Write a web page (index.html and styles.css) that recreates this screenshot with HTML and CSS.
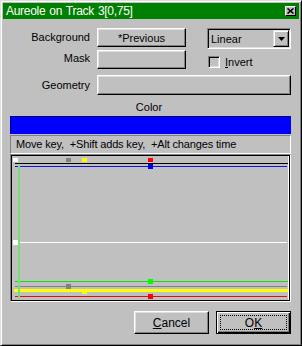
FILE: index.html
```html
<!DOCTYPE html>
<html lang="en">
<head>
    <meta charset="UTF-8">
    <title>Aureole on Track 3[0,75]</title>
    <link rel="stylesheet" href="styles.css">
</head>
<body>
    <div class="window">
        <div class="titlebar">
            <span class="title">Aureole on Track 3[0,75]</span>
            <span class="close">
                <svg width="7" height="6" viewBox="0 0 7 6"><path d="M0.5 0.5 L6.5 5.5 M6.5 0.5 L0.5 5.5" stroke="#000" stroke-width="1.6" fill="none"/></svg>
            </span>
        </div>

        <div class="dialog">
            <div class="row row-bg">
                <span class="lbl">Background</span>
                <button class="btn btn-src">*Previous</button>
                <div class="combo">
                    <span class="combo-text">Linear</span>
                    <span class="combo-arrow">
                        <svg width="7" height="4" viewBox="0 0 7 4"><path d="M0 0 H7 L3.5 4 Z" fill="#000"/></svg>
                    </span>
                </div>
            </div>

            <div class="row row-mask">
                <span class="lbl">Mask</span>
                <button class="btn btn-src"></button>
                <label class="check">
                    <span class="box"></span>
                    <span><u>I</u>nvert</span>
                </label>
            </div>

            <div class="row row-geo">
                <span class="lbl">Geometry</span>
                <button class="btn btn-geo"></button>
            </div>

            <div class="color-label">Color</div>
            <div class="swatch"></div>
            <div class="hint">Move key,  +Shift adds key,  +Alt changes time</div>

            <div class="graph">
                <svg class="curves" viewBox="11 155 279 146" shape-rendering="crispEdges">
                    <!-- value lines -->
                    <rect x="15" y="163" width="273" height="1" fill="#000"/>
                    <rect x="15" y="166" width="272" height="1" fill="#1414d8"/>
                    <rect x="15" y="242" width="272" height="1" fill="#fff"/>
                    <rect x="15" y="281" width="273" height="1" fill="#10e010"/>
                    <rect x="15" y="286" width="272" height="1" fill="#808080"/>
                    <rect x="14" y="289" width="274" height="3" fill="#ffff00"/>
                    <rect x="15" y="296" width="272" height="1" fill="#e01010"/>
                    <rect x="18" y="165" width="2" height="134" fill="#78e078"/>

                    <!-- keys -->
                    <rect x="13" y="158" width="5" height="4" fill="#fff"/>
                    <rect x="66" y="158" width="5" height="4" fill="#808080"/>
                    <rect x="82" y="158" width="5" height="4" fill="#ffff00"/>
                    <rect x="148" y="158" width="5" height="4" fill="#ff0000"/>
                    <rect x="148" y="164" width="5" height="5" fill="#0000e0"/>
                    <rect x="13" y="240" width="5" height="5" fill="#fff"/>
                    <rect x="148" y="279" width="5" height="5" fill="#00ff00"/>
                    <rect x="66" y="284" width="5" height="5" fill="#808080"/>
                    <rect x="82" y="289" width="5" height="5" fill="#ffff00"/>
                    <rect x="148" y="294" width="5" height="5" fill="#ff0000"/>
                </svg>
            </div>

            <div class="actions">
                <button class="btn btn-action"><span class="cap"><u>C</u>ancel</span></button>
                <button class="btn btn-action btn-default"><span class="cap focus">O<u>K</u></span></button>
            </div>
        </div>
    </div>
</body>
</html>
```

FILE: styles.css
```css
*{
    margin: 0;
    padding: 0;
    box-sizing: border-box;
}
body{
    width: 302px;
    height: 346px;
    background: #c0c0c0;
    font-family: "Liberation Sans", Arial, sans-serif;
    font-size: 11px;
    color: #000;
}
.window{
    width: 302px;
    height: 346px;
    background: #c0c0c0;
    border: 1px solid;
    border-color: #dfdfdf #000 #000 #dfdfdf;
    box-shadow: inset 1px 1px #fff, inset -1px -1px #808080;
    padding: 2px;
}
.titlebar{
    height: 16px;
    background: #008000;
    display: flex;
    align-items: center;
    padding-left: 3px;
}
.title{
    color: #fff;
    font-size: 12px;
    letter-spacing: -0.3px;
    word-spacing: 1px;
}
.close{
    margin-left: auto;
    margin-right: 3px;
    width: 11px;
    height: 10px;
    background: #c0c0c0;
    border: 1px solid;
    border-color: #fff #000 #000 #fff;
    display: flex;
    align-items: center;
    justify-content: center;
}
.dialog{
    padding-right: 8px;
}

/* form rows */
.row{
    display: flex;
    align-items: flex-start;
}
.row-bg{
    margin-top: 9px;
}
.row-mask{
    margin-top: 1px;
}
.row-geo{
    margin-top: 6px;
}
.lbl{
    width: 87px;
    margin-right: 7px;
    text-align: right;
    line-height: 19px;
}
.row-mask .lbl{
    line-height: 17px;
}
.row-geo .lbl{
    line-height: 20px;
}
.btn{
    font: inherit;
    color: #000;
    background: #c0c0c0;
    border: 1px solid;
    border-color: #fff #000 #000 #fff;
    box-shadow: inset -1px -1px #808080, inset 1px 1px #dfdfdf;
}
.btn-src{
    width: 89px;
    height: 19px;
}
.btn-geo{
    width: 194px;
    height: 20px;
}

.combo{
    margin-left: 21px;
    width: 84px;
    height: 21px;
    border: 1px solid;
    border-color: #808080 #fff #fff #808080;
    box-shadow: inset 1px 1px #000, inset -1px -1px #dfdfdf;
    padding: 1px;
    display: flex;
    align-items: center;
}
.combo-text{
    flex: 1;
    padding-left: 2px;
}
.combo-arrow{
    width: 16px;
    height: 17px;
    border: 1px solid;
    border-color: #dfdfdf #000 #000 #dfdfdf;
    box-shadow: inset 1px 1px #fff, inset -1px -1px #808080;
    display: flex;
    align-items: center;
    justify-content: center;
}

.check{
    margin-left: 22px;
    margin-top: 6px;
    display: flex;
    align-items: center;
    gap: 5px;
    line-height: 12px;
}
.box{
    width: 12px;
    height: 12px;
    border: 1px solid;
    border-color: #808080 #fff #fff #808080;
    box-shadow: inset 1px 1px #000, inset -1px -1px #dfdfdf;
}

/* color and keys */
.color-label{
    margin-top: 6px;
    line-height: 13px;
    text-align: center;
    padding-left: 4px;
}
.swatch{
    margin: 2px 0 0 7px;
    height: 18px;
    background: #0000ff;
    border: 1px solid;
    border-color: #00007a #0000ff #0000ff #00007a;
}
.hint{
    margin: 1px 0 0 7px;
    height: 19px;
    border: 1px solid;
    border-color: #808080 #fff #fff #808080;
    padding-left: 5px;
    line-height: 17px;
    white-space: pre;
    letter-spacing: -0.15px;
}
.graph{
    margin: 0 0 0 7px;
    height: 148px;
    border: 1px solid;
    border-color: #808080 #fff #fff #808080;
    box-shadow: inset 1px 1px #000, inset -1px -1px #000, inset -2px 0 #fff;
}
.curves{
    display: block;
    width: 279px;
    height: 146px;
}

/* dialog buttons */
.actions{
    margin-top: 9px;
    display: flex;
    justify-content: flex-end;
    gap: 7px;
}
.btn-action{
    width: 75px;
    height: 23px;
    padding: 3px;
    display: flex;
}
.cap{
    flex: 1;
    display: flex;
    align-items: center;
    justify-content: center;
    font-size: 12px;
}
.btn-default{
    border: 1px solid #000;
    box-shadow: inset 1px 1px #fff, inset -1px -1px #000, inset -2px -2px #808080;
}
.focus{
    border: 1px dotted #000;
}
```
